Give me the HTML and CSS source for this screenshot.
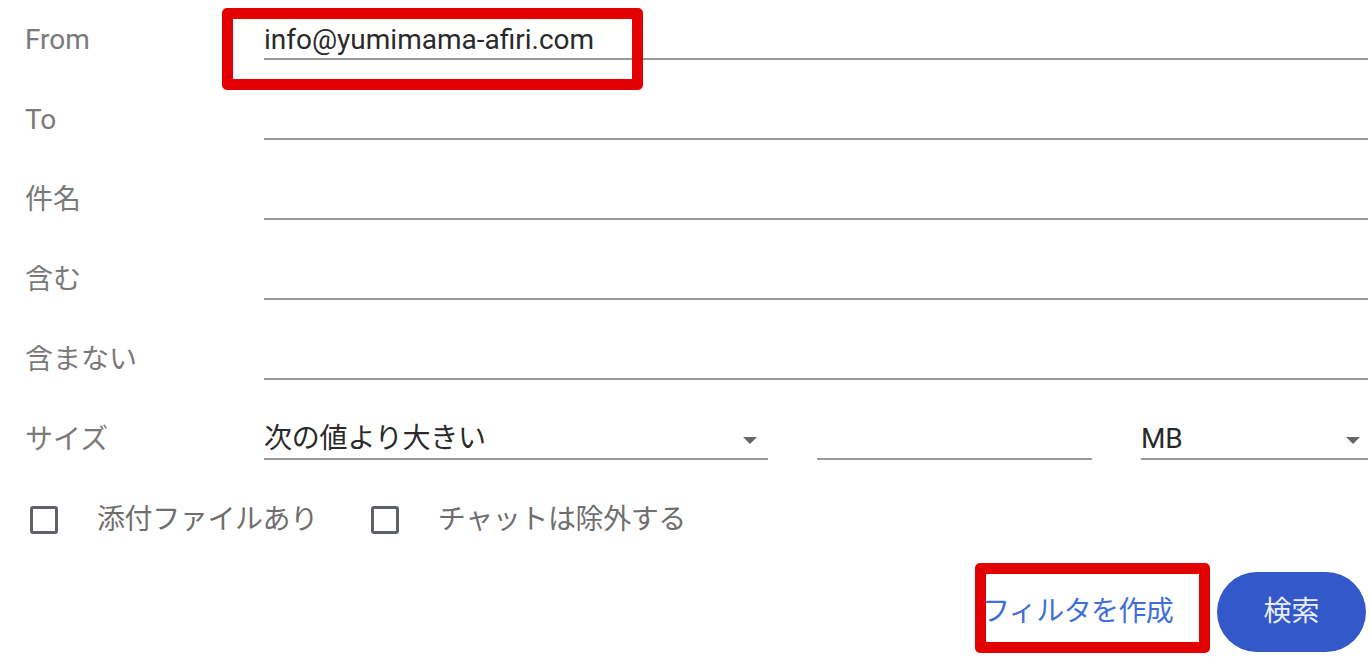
FILE: index.html
```html
<!DOCTYPE html>
<html lang="ja">
<head>
<meta charset="utf-8">
<title>検索オプション</title>
<link rel="stylesheet" href="styles.css">
</head>
<body>
<div class="form">
  <div class="row">
    <div class="lbl">From</div>
    <div class="field field-wide">
      <span class="val">info@yumimama-afiri.com</span>
      <div class="highlight hl-from"></div>
    </div>
  </div>
  <div class="row">
    <div class="lbl">To</div>
    <div class="field field-wide"></div>
  </div>
  <div class="row">
    <div class="lbl">件名</div>
    <div class="field field-wide"></div>
  </div>
  <div class="row">
    <div class="lbl">含む</div>
    <div class="field field-wide"></div>
  </div>
  <div class="row">
    <div class="lbl">含まない</div>
    <div class="field field-wide"></div>
  </div>
  <div class="row">
    <div class="lbl">サイズ</div>
    <div class="field select sel-size"><span class="val">次の値より大きい</span><span class="arrow"></span></div>
    <div class="field num"></div>
    <div class="field select sel-unit"><span class="val">MB</span><span class="arrow"></span></div>
  </div>
  <div class="row checks">
    <span class="box"></span><span class="clbl clbl-1">添付ファイルあり</span>
    <span class="box"></span><span class="clbl">チャットは除外する</span>
  </div>
  <div class="actions">
    <div class="link-btn"><span class="link-text">フィルタを作成</span><div class="highlight hl-btn"></div></div>
    <div class="search-btn">検索</div>
  </div>
</div>
</body>
</html>
```

FILE: styles.css
```css
html, body {
  margin: 0;
  padding: 0;
  background: #ffffff;
}
body {
  font-family: Roboto, "Noto Sans CJK JP", sans-serif;
  font-size: 28px;
  color: #222222;
  width: 1370px;
  height: 668px;
  overflow: hidden;
}
.form {
  display: flex;
  flex-direction: column;
  gap: 40px;
  padding-top: 20px;
  padding-left: 25px;
  padding-right: 2px;
}
.row {
  display: flex;
  height: 40px;
  align-items: stretch;
}
.lbl {
  width: 239px;
  flex: none;
  line-height: 40px;
  color: #7a7a7a;
}
.field {
  position: relative;
  box-sizing: border-box;
  height: 40px;
  border-bottom: 2px solid #9a9a9a;
  line-height: 40px;
}
.field-wide {
  flex: 1;
}
.val {
  color: #2a2a2a;
  white-space: nowrap;
}
.select {
  display: flex;
  justify-content: space-between;
  align-items: center;
}
.select .val {
  line-height: 40px;
  letter-spacing: -0.2px;
}
.sel-size {
  width: 504px;
}
.num {
  width: 275px;
  margin-left: 49px;
}
.sel-unit {
  flex: 1;
  margin-left: 49px;
}
.arrow {
  width: 0;
  height: 0;
  border-left: 7px solid transparent;
  border-right: 7px solid transparent;
  border-top: 7px solid #666666;
  margin-right: 11px;
  margin-top: 2px;
}
.sel-unit .arrow {
  margin-right: 8px;
}
.checks {
  align-items: center;
  padding-left: 5px;
}
.box {
  box-sizing: border-box;
  width: 28px;
  height: 28px;
  border: 3px solid #5f6368;
  border-radius: 3px;
  flex: none;
}
.clbl {
  margin-left: 39px;
  color: #6e6e6e;
  line-height: 40px;
  letter-spacing: -0.4px;
}
.clbl-1 {
  margin-right: 53px;
}
.actions {
  display: flex;
  justify-content: flex-end;
  align-items: center;
  gap: 10px;
  margin-top: -8px;
  padding-right: 2px;
}
.link-btn {
  position: relative;
  width: 222px;
  height: 80px;
  line-height: 80px;
  color: #3e6fd8;
}
.link-text {
  display: inline-block;
  margin-left: -3px;
  letter-spacing: -0.6px;
}
.search-btn {
  width: 149px;
  height: 80px;
  border-radius: 40px;
  background: #3358c9;
  color: #e8edfa;
  text-align: center;
  line-height: 80px;
}
.highlight {
  position: absolute;
  box-sizing: border-box;
  border: 11px solid #e30000;
  border-radius: 5px;
  pointer-events: none;
}
.hl-from {
  left: -42px;
  top: -12px;
  width: 421px;
  height: 82px;
}
.hl-btn {
  left: -10px;
  top: -9px;
  width: 235px;
  height: 90px;
}
```
